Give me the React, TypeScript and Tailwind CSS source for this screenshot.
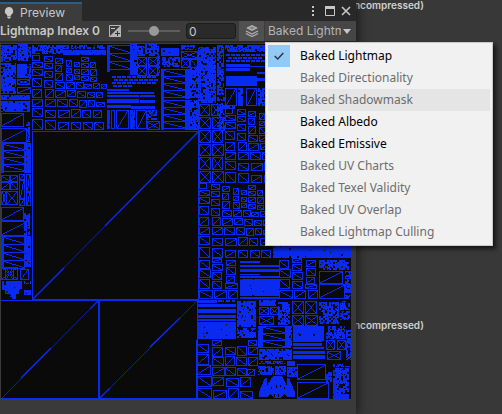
import { useState } from "react";

type Mark = "" | "/" | "\\" | "x";
type Island = [number, number, number, number, Mark?];
type Patch = [number, number, number, number, number];

const BLUE = "#0a2af0";

// Packed cluster of small charts, reused three times in the atlas.
const cluster: Island[] = [
  [32, 55, 8, 6], [32, 62, 11, 6, "\\"], [32, 69, 11, 7, "\\"], [32, 78, 10, 9, "\\"],
  [32, 89, 10, 9, "/"], [32, 99, 11, 8, "/"], [32, 108, 11, 9, "\\"], [32, 119, 11, 11, "\\"],
  [44, 56, 9, 6, "\\"], [44, 63, 9, 6, "\\"], [44, 71, 9, 7, "\\"], [44, 80, 9, 8, "\\"],
  [45, 89, 9, 9, "/"], [45, 99, 11, 8, "/"], [45, 110, 11, 8, "\\"], [45, 120, 11, 10, "\\"],
  [55, 58, 8, 6, "/"], [55, 65, 7, 7, "/"], [55, 73, 8, 8, "/"], [55, 82, 10, 7, "\\"],
  [55, 90, 11, 8, "/"], [57, 99, 11, 8, "\\"], [58, 110, 12, 8, "/"], [58, 122, 11, 8, "/"],
  [66, 60, 6, 7, "/"], [66, 68, 6, 5, "/"], [66, 74, 7, 7, "\\"], [66, 82, 9, 7, "/"],
  [67, 90, 9, 7, "/"], [69, 99, 9, 8, "\\"], [71, 109, 10, 9, "/"], [71, 122, 10, 8, "\\"],
  [74, 62, 6, 5, "/"], [74, 69, 6, 5, "\\"], [74, 75, 6, 5, "/"], [76, 82, 8, 7, "\\"],
  [77, 91, 9, 7, "\\"], [79, 100, 8, 8, "/"], [81, 57, 8, 5, "/"], [81, 63, 8, 5, "\\"],
  [81, 69, 8, 6, "/"], [81, 76, 8, 5, "\\"], [84, 84, 8, 5, "/"], [87, 92, 8, 6, "\\"],
  [88, 100, 7, 7, "\\"], [82, 110, 9, 8, "\\"], [93, 110, 9, 8, "/"], [83, 122, 10, 8, "\\"],
  [94, 122, 10, 8, "\\"], [90, 62, 6, 6, "/"], [90, 69, 7, 7, "/"], [90, 77, 7, 5, "\\"],
  [93, 83, 7, 6, "/"], [101, 84, 6, 5, "/"], [96, 92, 7, 6, "/"], [96, 102, 9, 5, "/"],
];

const islands: Island[] = [
  [17, 79, 13, 6, "x"], [17, 87, 14, 7, "/"], [1, 113, 23, 14, "/"], [1, 128, 26, 15, "/"],
  [1, 175, 9, 7, "\\"], [10, 175, 8, 7, "/"], [1, 182, 9, 8, "/"], [10, 182, 8, 8, "\\"],
  [1, 191, 6, 14, "x"], [6, 191, 12, 14, "x"],
  [19, 174, 6, 6, "/"], [19, 180, 6, 19, "/"], [19, 199, 6, 7, "/"],
  [26, 174, 5, 18, "/"], [26, 192, 5, 14, "/"],
  [1, 207, 23, 14, "/"], [1, 221, 26, 15, "/"], [1, 267, 17, 13, "x"], [5, 267, 9, 13, "x"], [20, 269, 9, 11, "/"],
  [137, 57, 10, 9, "x"], [148, 57, 10, 9, "x"], [137, 66, 10, 10, "x"], [148, 66, 10, 10, "x"],
  [116, 110, 13, 19, "/"], [136, 110, 11, 19, "/"], [111, 110, 4, 19], [147, 121, 13, 9, "x"],
  [181, 51, 17, 8, "x"], [181, 59, 9, 9, "x"], [190, 59, 8, 9, "\\"],
  [199, 104, 11, 12, "x"], [211, 104, 10, 12, "x"], [199, 117, 12, 12, "x"], [212, 117, 12, 12, "x"],
  [199, 130, 12, 13, "x"], [212, 130, 11, 13, "x"], [199, 144, 12, 12, "x"], [212, 144, 12, 12, "x"],
  [199, 157, 12, 13, "x"], [212, 157, 11, 13, "x"], [199, 171, 12, 12, "x"], [212, 171, 12, 12, "x"],
  [225, 88, 12, 18, "/"], [246, 88, 11, 18, "/"],
  [199, 260, 11, 9, "\\"], [199, 269, 12, 9, "\\"], [199, 279, 11, 10, "\\"], [199, 290, 14, 9, "\\"],
  [212, 258, 10, 5, "/"], [212, 264, 11, 7, "\\"], [212, 272, 10, 8, "\\"], [212, 281, 10, 8, "\\"], [214, 290, 13, 9, "/"],
  [226, 260, 10, 6, "/"], [226, 267, 10, 8, "\\"], [226, 276, 9, 7, "/"], [225, 283, 13, 6, "/"], [228, 290, 10, 9, "/"],
  [279, 260, 10, 9, "\\"], [279, 269, 12, 9, "\\"], [279, 279, 11, 10, "\\"], [279, 290, 14, 9, "\\"],
  [292, 258, 10, 5, "/"], [292, 264, 10, 7, "\\"], [292, 272, 11, 8, "\\"], [292, 281, 11, 8, "\\"], [294, 290, 12, 9, "/"],
  [306, 260, 10, 7, "/"], [306, 268, 10, 8, "\\"], [306, 277, 9, 7, "/"], [305, 284, 12, 5, "/"], [308, 290, 10, 9, "/"],
  [319, 271, 24, 13, "/"], [319, 284, 26, 15, "/"],
  [259, 307, 10, 8, "x"], [270, 307, 9, 8, "x"], [259, 316, 15, 9, "x"],
  [292, 301, 12, 13, "x"], [305, 301, 12, 13, "x"], [292, 315, 12, 11, "x"], [305, 315, 13, 11, "x"],
  [326, 340, 9, 10, "x"], [337, 340, 9, 10, "x"], [327, 351, 14, 9, "x"],
  [297, 364, 29, 16, "/"], [297, 382, 32, 17, "/"],
  [197, 344, 12, 9, "\\"], [197, 354, 12, 11, "/"], [197, 365, 14, 10, "/"], [197, 376, 15, 11, "\\"], [197, 388, 15, 11, "\\"],
  [212, 340, 10, 6, "/"], [212, 347, 11, 10, "/"], [212, 357, 12, 9, "\\"], [212, 367, 13, 9, "/"], [212, 377, 12, 9, "/"], [213, 390, 14, 9, "/"],
  [225, 347, 11, 8, "\\"], [225, 356, 10, 10, "/"], [225, 367, 11, 9, "\\"], [226, 378, 13, 9, "\\"], [228, 388, 11, 11, "/"],
  [237, 346, 10, 10, "\\"], [236, 357, 11, 9, "\\"], [237, 368, 10, 8, "\\"], [240, 377, 11, 10, "/"], [240, 391, 13, 8, "\\"],
  [248, 340, 9, 6, "\\"], [248, 347, 10, 8, "/"], [248, 357, 10, 9, "/"], [247, 369, 8, 7, "/"],
];

// x, y, width, height, share of empty texels
const patches: Patch[] = [
  [1, 45, 10, 17, 0.2], [11, 45, 6, 15, 0.35], [18, 44, 10, 17, 0.15], [27, 47, 4, 13, 0.45],
  [1, 63, 15, 31, 0.15], [17, 64, 10, 14, 0.06], [27, 64, 4, 15, 0.35], [1, 95, 29, 5, 0.05], [1, 101, 29, 11, 0.12],
  [26, 122, 4, 20, 0.3], [24, 143, 7, 30, 0.05], [24, 213, 6, 22, 0.35], [24, 236, 7, 31, 0.05],
  [2, 281, 20, 9, 0.08], [5, 290, 14, 4, 0.1], [10, 293, 6, 6, 0.05], [24, 281, 7, 3, 0.3], [24, 290, 7, 5, 0.15],
  [32, 45, 31, 9, 0.25], [63, 45, 43, 4, 0.4], [63, 50, 43, 5, 0.08],
  [130, 44, 7, 31, 0.08], [137, 44, 22, 12, 0.3], [157, 56, 3, 20, 0.25],
  [107, 110, 3, 19, 0.05], [130, 110, 5, 19, 0.1], [147, 110, 10, 10, 0.3],
  [161, 48, 18, 8, 0.03], [181, 45, 15, 5, 0.2], [162, 57, 18, 10, 0.3], [190, 68, 8, 30, 0.22], [190, 100, 8, 30, 0.18],
  [199, 47, 17, 56, 0.15], [217, 45, 7, 50, 0.28], [217, 97, 8, 34, 0.4],
  [225, 45, 40, 7, 0.22], [238, 88, 5, 18, 0.05], [258, 88, 7, 18, 0.2], [220, 106, 15, 3, 0.05],
  [273, 246, 78, 12, 0.02], [319, 260, 30, 10, 0.22], [345, 271, 6, 28, 0.35],
  [218, 300, 17, 2, 0.4], [198, 322, 38, 17, 0.02], [237, 301, 19, 26, 0.12], [237, 328, 19, 10, 0.3],
  [259, 300, 17, 6, 0.1], [278, 302, 12, 23, 0.22], [258, 326, 5, 22, 0.06], [285, 326, 7, 22, 0.08],
  [259, 349, 33, 11, 0.12], [259, 361, 26, 3, 0.35], [258, 366, 16, 9, 0.3], [275, 366, 11, 9, 0.15], [287, 361, 10, 5, 0.25],
  [287, 367, 10, 10, 0.1],
  [319, 302, 20, 22, 0.28], [340, 301, 10, 9, 0.2], [340, 311, 10, 9, 0.25], [293, 326, 31, 15, 0.02],
  [326, 326, 19, 13, 0.3], [346, 330, 5, 30, 0.3], [326, 372, 6, 10, 0.2], [333, 368, 16, 31, 0.15], [333, 364, 17, 3, 0.35],
  [240, 279, 39, 17, 0.01],
];

const solids: [number, number, number, number][] = [
  [1, 143, 3, 30], [1, 236, 3, 31], [107, 45, 3, 27], [161, 69, 3, 61], [185, 69, 5, 30], [185, 100, 5, 30],
  [107, 89, 22, 2], [107, 92, 47, 2], [107, 95, 32, 2], [107, 99, 32, 4], [140, 95, 15, 2], [140, 100, 15, 3],
  [107, 105, 24, 3], [131, 106, 24, 3],
  [226, 64, 24, 3], [226, 68, 24, 3], [226, 76, 31, 10], [250, 66, 15, 1], [257, 72, 8, 2], [257, 78, 8, 3],
  [240, 261, 20, 2], [240, 265, 39, 2], [240, 269, 39, 3], [240, 274, 20, 1], [240, 276, 39, 2], [240, 297, 39, 2],
  [197, 300, 20, 3], [198, 304, 38, 3], [198, 309, 38, 4], [198, 315, 38, 3], [198, 319, 38, 2],
  [293, 340, 29, 2], [293, 343, 29, 3], [293, 347, 31, 2], [293, 351, 32, 3], [293, 355, 32, 4],
  [32, 131, 1, 169], [32, 131, 167, 1], [198, 48, 1, 252], [32, 299, 166, 2], [1, 300, 32, 1],
  [98, 300, 2, 98], [197, 300, 1, 98], [1, 398, 198, 1], [196, 340, 1, 58],
];

// x, first rung, width, rung spacing, rung count
const ladders: Patch[] = [
  [3, 143, 22, 7, 4], [3, 236, 22, 8, 4], [109, 45, 22, 8, 3], [163, 69, 23, 7, 4], [163, 100, 23, 7, 4], [262, 326, 24, 7, 3],
];

const dashes: Patch[] = [
  [112, 76, 46, 9, 5], [113, 85, 20, 4, 5], [226, 54, 39, 9, 5],
];

function step(x0: number, y0: number, x1: number, y1: number) {
  const n = Math.max(Math.abs(x1 - x0), Math.abs(y1 - y0));
  let d = "";
  for (let i = 0; i <= n; i++) {
    const x = Math.round(x0 + ((x1 - x0) * i) / n);
    const y = Math.round(y0 + ((y1 - y0) * i) / n);
    d += `M${x} ${y}h1v1h-1z`;
  }
  return d;
}

function islandPath([x, y, w, h, mark = ""]: Island) {
  let d = `M${x} ${y}h${w}v1h${-w}zM${x} ${y + h - 1}h${w}v1h${-w}zM${x} ${y}h1v${h}h-1zM${x + w - 1} ${y}h1v${h}h-1z`;
  const r = x + w - 2;
  const b = y + h - 2;
  if (mark === "/" || mark === "x") d += step(x + 1, b, r, y + 1);
  if (mark === "\\" || mark === "x") d += step(x + 1, y + 1, r, b);
  return d;
}

function hash(x: number, y: number) {
  const v = Math.sin(x * 12.9898 + y * 78.233) * 43758.5453;
  return v - Math.floor(v);
}

// Mixes two-texel holes with single ones, so that the charts read as ragged blobs.
function patchPath([x, y, w, h, empty]: Patch) {
  let d = "";
  for (let j = 0; j < h; j++) {
    for (let i = 0; i < w; i++) {
      const coarse = hash(x + Math.floor(i / 2), 500 + y + Math.floor(j / 2));
      const fine = hash(x + i, y + j);
      if (coarse >= empty * 0.75 && fine >= empty * 0.35) d += `M${x + i} ${y + j}h1v1h-1z`;
    }
  }
  return d;
}

function ladderPath([x, y, w, gap, count]: Patch) {
  let d = "";
  for (let i = 0; i < count; i++) d += islandPath([x, y + i * gap, w, gap + 1, "\\"]);
  return d;
}

function dashPath([x, y, w, h, pitch]: Patch) {
  let d = "";
  for (let j = 0; j + 2 <= h; j += 3) {
    for (let i = (j % 2) * 2; i + 3 <= w; i += pitch) d += `M${x + i} ${y + j}h${pitch - 1}v2h${1 - pitch}z`;
  }
  return d;
}

const clusterPath = cluster.map(islandPath).join("");
const atlasPath = [
  ...islands.map(islandPath),
  ...patches.map(patchPath),
  ...ladders.map(ladderPath),
  ...dashes.map(dashPath),
].join("");
const solidPath = solids.map(([x, y, w, h]) => `M${x} ${y}h${w}v${h}h${-w}z`).join("");

function LightmapAtlas() {
  return (
    <svg viewBox="1 44 350 355" className="block w-full bg-[#0a0a0a]" shapeRendering="crispEdges" role="img" aria-label="Lightmap">
      <g fill={BLUE}>
        <path d={clusterPath} />
        <path d={clusterPath} transform="translate(193 53)" />
        <path d={clusterPath} transform="translate(167 128)" />
        <path d={atlasPath} />
        <path d={solidPath} />
        <path d="M273 376h9l5 10v-8h2l6 14v5h-7l-4-3-3 4h-7l-3-4-4 3h-8v-5l6-14h2v8z" />
      </g>
      <path d="M271 387h1v2h-1zM276 385h1v3h-1zM280 385h1v2h-1zM284 387h1v2h-1zM274 394h1v3h-1zM278 394h1v3h-1z" fill="#0a0a0a" />
      <g stroke={BLUE} fill="none" shapeRendering="auto">
        <path d="M33 299L198 132M2 398L98 301M100 398L197 301" strokeWidth="0.8" opacity="0.9" />
        <path d="M33 299L64 268M105 226L198 132M21 378L51 348M90 309L98 301M100 398L110 388M150 347L180 318" strokeWidth="1.4" />
      </g>
    </svg>
  );
}

const modes = [
  { name: "Baked Lightmap", enabled: true },
  { name: "Baked Directionality", enabled: false },
  { name: "Baked Shadowmask", enabled: false },
  { name: "Baked Albedo", enabled: true },
  { name: "Baked Emissive", enabled: true },
  { name: "Baked UV Charts", enabled: false },
  { name: "Baked Texel Validity", enabled: false },
  { name: "Baked UV Overlap", enabled: false },
  { name: "Baked Lightmap Culling", enabled: false },
];

export default function App() {
  const [mode, setMode] = useState("Baked Lightmap");
  const [exposure, setExposure] = useState(0);

  return (
    <div className="grid min-h-screen grid-cols-[356fr_146fr] overflow-hidden bg-[#383838] font-['Inter',sans-serif] text-xs text-[#c8c8c8]">
      <main className="relative z-10 min-w-0 bg-[#3a3a3a] shadow-[2px_0_10px_rgba(0,0,0,0.55)]">
        <header className="flex h-[21px] items-end justify-between bg-[#282828]">
          <div className="flex h-[19px] w-[82px] items-center gap-1.5 border-t-2 border-[#2c5d87] bg-[#3c3c3c] pl-1">
            <svg viewBox="0 0 10 12" className="h-3 w-2.5" fill="#c8c8c8" aria-hidden="true">
              <path d="M5 0a4.2 4.2 0 0 1 2.4 7.6c-.5.4-.6.8-.6 1.4H3.200c0-.6-.1-1-.6-1.400A4.200 4.200 0 0 1 5 0zM3.200 9.600h3.600v.8L5.800 11.500H4.200l-1-1.100z" />
            </svg>
            <h1 className="leading-4">Preview</h1>
          </div>
          <div className="flex h-[21px] items-center gap-1.5 pr-[5px]">
            <button type="button" aria-label="More" className="flex w-2.5 justify-center">
              <svg viewBox="0 0 10 12" className="h-3 w-2.5" fill="#c8c8c8"><path d="M3 1h2v2H3zM3 5h2v2H3zM3 9h2v2H3z" /></svg>
            </button>
            <button type="button" aria-label="Maximize">
              <svg viewBox="0 0 10 10" className="h-2.5 w-2.5" fill="none" stroke="#c8c8c8"><path d="M.5.5h9v9h-9z" /><path d="M0 1.500h10" strokeWidth="3" /></svg>
            </button>
            <button type="button" aria-label="Close">
              <svg viewBox="0 0 10 10" className="h-2.5 w-2.5" fill="none" stroke="#c8c8c8" strokeWidth="1.600"><path d="M1 1l8 8M9 1L1 9" /></svg>
            </button>
          </div>
        </header>

        <div className="flex h-5 items-center bg-[#3c3c3c]">
          <span className="w-[109px] shrink-0 whitespace-nowrap font-semibold">Lightmap Index 0</span>
          <svg viewBox="0 0 12 12" className="h-3 w-3 shrink-0" aria-hidden="true">
            <path d="M.5.5h11v11H.5z" fill="none" stroke="#b4b4b4" />
            <path d="M12 0v12H0z" fill="#b4b4b4" />
            <path d="M2 3.500h4" stroke="#c8c8c8" />
            <path d="M6 8.500h5M8.500 6v5" stroke="#303030" />
          </svg>
          <input
            type="range" aria-label="Exposure" min={-10} max={10} value={exposure}
            onChange={(e) => setExposure(Number(e.target.value))}
            className="ml-[7px] h-4 w-[52px] shrink-0 appearance-none bg-[linear-gradient(#5e5e5e,#5e5e5e)] bg-[length:100%_2px] bg-center bg-no-repeat [&::-webkit-slider-thumb]:h-2.5 [&::-webkit-slider-thumb]:w-2.5 [&::-webkit-slider-thumb]:appearance-none [&::-webkit-slider-thumb]:rounded-full [&::-webkit-slider-thumb]:bg-[#999999]"
          />
          <input
            type="text" aria-label="Exposure value" value={exposure}
            onChange={(e) => setExposure(Number(e.target.value) || 0)}
            className="ml-1.5 mr-[3px] h-4 w-[50px] shrink-0 rounded-[3px] border border-[#1c1c1c] bg-[#2a2a2a] px-0.5 leading-3"
          />
          <button type="button" aria-label="Layers" className="mr-px flex h-5 w-[25px] shrink-0 items-center justify-center bg-[#505050]">
            <svg viewBox="0 0 14 12" className="h-3 w-3.5">
              <path d="M7 0l6 3-6 3-6-3z" fill="#b0b0b0" />
              <path d="M1 6l6 3 6-3M1 8.500l6 3 6-3" fill="none" stroke="#b0b0b0" strokeWidth="1.300" />
              <path d="M4.500 3h5M7 1.800v2.400" stroke="#666" strokeWidth=".8" />
            </svg>
          </button>
          <div className="flex h-5 min-w-0 flex-1 items-center bg-[#464646] pl-[3px]">
            <select
              aria-label="Preview mode" value={mode} onChange={(e) => setMode(e.target.value)}
              className="w-[73px] shrink-0 appearance-none overflow-hidden text-clip text-[#b4b4b4] outline-none"
            >
              {modes.map((m) => <option key={m.name} disabled={!m.enabled}>{m.name}</option>)}
            </select>
            <svg viewBox="0 0 8 5" className="ml-0.5 h-[5px] w-2 shrink-0" fill="#c8c8c8" aria-hidden="true"><path d="M0 0h8L4 5z" /></svg>
          </div>
        </div>

        <div className="border-t-2 border-[#272727] pl-px pr-[5px] pt-px">
          <LightmapAtlas />
        </div>

        <div role="menu" className="absolute left-[265px] top-[42px] w-[228px] border border-[#c8c8c8] bg-[#f1f1f1] p-0.5 font-['Noto_Sans',sans-serif] text-xs text-black shadow-[3px_3px_4px_rgba(0,0,0,0.6)]">
          {modes.map((m, i) => (
            <button
              key={m.name} type="button" role="menuitemradio" aria-checked={m.name === mode} disabled={!m.enabled}
              onClick={() => setMode(m.name)}
              className={`flex h-[22px] w-full items-center gap-2.5 text-left disabled:text-[#6d6d6d] ${i === 2 ? "bg-[#e5e5e5]" : ""}`}
            >
              <span className={`flex h-[22px] w-[22px] shrink-0 items-center justify-center ${m.name === mode ? "bg-[#91c9f7]" : ""}`}>
                {m.name === mode && (
                  <svg viewBox="0 0 10 8" className="h-2 w-2.5" fill="none" stroke="#2b3a47" strokeWidth="1.500"><path d="M.7 4l3 3L9.300 1" /></svg>
                )}
              </span>
              <span className="whitespace-nowrap leading-5">{m.name}</span>
            </button>
          ))}
        </div>
      </main>

      <aside className="flex min-w-0 flex-col text-[10px] font-semibold leading-[10px] text-[#d0d0d0]">
        <p className="-ml-0.5 whitespace-nowrap">ncompressed)</p>
        <p className="-ml-0.5 mt-[310px] whitespace-nowrap">ncompressed)</p>
      </aside>
    </div>
  );
}
